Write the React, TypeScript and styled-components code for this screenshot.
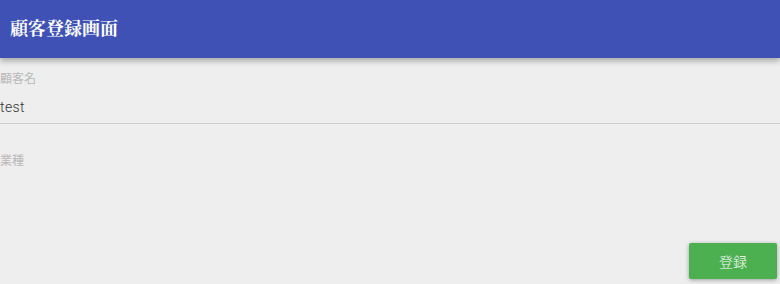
import React from "react";
import styled, { createGlobalStyle } from "styled-components";

const GlobalStyle = createGlobalStyle`
  html, body {
    margin: 0;
    padding: 0;
    background: #eeeeee;
  }
  body {
    font-family: Roboto, "Noto Sans CJK JP", sans-serif;
  }
`;

const Page = styled.div`
  width: 780px;
  height: 284px;
  display: flex;
  flex-direction: column;
  overflow: hidden;
  background: #eeeeee;
`;

const AppBar = styled.header`
  height: 58px;
  flex-shrink: 0;
  background: #3f51b5;
  display: flex;
  align-items: center;
  padding-left: 10px;
  box-shadow: 0 3px 6px rgba(0, 0, 0, 0.3);
  position: relative;
  z-index: 1;
`;

const Title = styled.h1`
  margin: 0;
  color: #ffffff;
  font-family: "Liberation Serif", "Noto Serif CJK JP", "Noto Sans CJK JP", serif;
  font-size: 18px;
  font-weight: bold;
  padding-bottom: 4px;
`;

const Form = styled.div`
  flex: 1;
  display: flex;
  flex-direction: column;
  padding-top: 14px;
`;

const Field = styled.div<{ $underline?: boolean }>`
  display: flex;
  flex-direction: column;
  height: ${(p) => (p.$underline ? "51px" : "auto")};
  border-bottom: ${(p) => (p.$underline ? "1px solid #cccccc" : "none")};
`;

const Label = styled.label<{ $top?: number }>`
  color: #b8b8b8;
  font-size: 12px;
  line-height: 14px;
  margin-top: ${(p) => p.$top ?? 0}px;
`;

const Value = styled.div`
  color: #333333;
  font-size: 14px;
  font-weight: 300;
  letter-spacing: 0.4px;
  line-height: 16px;
  margin-top: 13px;
`;

const Actions = styled.div`
  flex: 1;
  display: flex;
  justify-content: flex-end;
  align-items: flex-end;
  padding: 0 3px 5px 0;
`;

const SubmitButton = styled.button`
  width: 88px;
  height: 36px;
  border: none;
  border-radius: 2px;
  background: #4caf50;
  color: #ffffff;
  font-family: Roboto, "Noto Sans CJK JP", sans-serif;
  font-size: 14px;
  font-weight: 300;
  box-shadow: 0 1px 4px rgba(0, 0, 0, 0.35);
  cursor: pointer;
`;

export default function App() {
  return (
    <>
      <GlobalStyle />
      <Page>
        <AppBar>
          <Title>顧客登録画面</Title>
        </AppBar>
        <Form>
          <Field $underline>
            <Label>顧客名</Label>
            <Value>test</Value>
          </Field>
          <Field>
            <Label $top={30}>業種</Label>
          </Field>
          <Actions>
            <SubmitButton>登録</SubmitButton>
          </Actions>
        </Form>
      </Page>
    </>
  );
}
